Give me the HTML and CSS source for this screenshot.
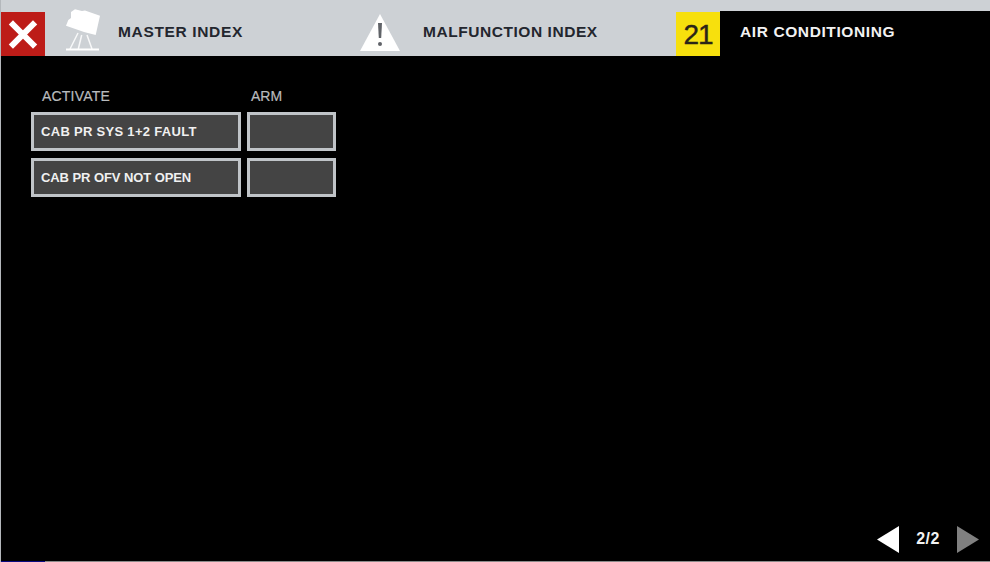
FILE: index.html
```html
<!DOCTYPE html>
<html lang="en">
<head>
<meta charset="utf-8">
<title>Air Conditioning</title>
<link rel="stylesheet" href="styles.css">
</head>
<body>
<div class="app">
  <header class="topbar">
    <button class="close" aria-label="Close">
      <svg width="44" height="44" viewBox="0 0 44 44"><path d="M12 12.5 L32 32.5 M32 12.5 L12 32.5" stroke="#fff" stroke-width="6" stroke-linecap="square" fill="none"/></svg>
    </button>
    <div class="tab tab-master">
      <svg class="icon-master" width="38" height="44" viewBox="0 0 38 44">
        <path d="M6 4 L10 1.3 L17 3 L20 2.5 L35 7.7 L30.7 27 L19 24 L1 17.7 L3.3 12 L6 10 Z" fill="#fff"/>
        <path d="M13 25 L5 41 M16.7 27 L13.3 41 M22 27 L27 41" stroke="#fff" stroke-width="1.5" fill="none" opacity=".85"/>
        <path d="M1 41.5 H34" stroke="#fff" stroke-width="2" fill="none"/>
      </svg>
      <span class="tab-label">MASTER INDEX</span>
    </div>
    <div class="tab tab-malfunction">
      <svg class="icon-warn" width="40" height="37" viewBox="0 0 40 37">
        <path d="M20 0 L40 37 H0 Z" fill="#fff"/>
        <path d="M18 9 H22 L21.2 24 H18.8 Z" fill="#606368"/>
        <circle cx="20" cy="30" r="2" fill="#606368"/>
      </svg>
      <span class="tab-label">MALFUNCTION INDEX</span>
    </div>
    <div class="chapter">21</div>
    <div class="tab-active"><span class="tab-label-active">AIR CONDITIONING</span></div>
  </header>

  <main class="content">
    <div class="grid">
      <div class="col-head">ACTIVATE</div>
      <div class="col-head col-head-arm">ARM</div>
      <div class="btn btn-wide">CAB PR SYS 1+2 FAULT</div>
      <div class="btn"></div>
      <div class="btn btn-tight">CAB PR OFV NOT OPEN</div>
      <div class="btn"></div>
    </div>
  </main>

  <footer class="pager">
    <svg width="22" height="27" viewBox="0 0 22 27"><path d="M22 0 V27 L0 13.5 Z" fill="#fff"/></svg>
    <span class="page-num">2/2</span>
    <svg width="22" height="27" viewBox="0 0 22 27"><path d="M0 0 V27 L22 13.5 Z" fill="#808080"/></svg>
  </footer>
  <div class="edge"><span class="edge-blue"></span></div>
</div>
</body>
</html>
```
FILE: styles.css
```css
* { box-sizing: border-box; }
html, body { margin: 0; padding: 0; background: #000; }
body { font-family: "Liberation Sans", Arial, sans-serif; }
.app {
  width: 990px;
  height: 562px;
  display: flex;
  flex-direction: column;
  border-left: 1px solid #b4b8bc;
  overflow: hidden;
}
.topbar {
  height: 56px;
  flex: none;
  background: #cdd1d5;
  display: flex;
  align-items: stretch;
  padding-top: 12px;
}
.close {
  width: 44px;
  height: 44px;
  flex: none;
  padding: 0;
  border: 0;
  background: #bd1c18;
  display: block;
}
.close svg { display: block; }
.tab { display: flex; align-items: flex-end; }
.tab-master { width: 315px; padding-left: 20px; }
.tab-malfunction { width: 316px; }
.icon-master { display: block; flex: none; align-self: flex-start; margin-top: -4px; }
.icon-warn { display: block; flex: none; margin-bottom: 5px; }
.tab-label {
  font-size: 15.5px;
  font-weight: bold;
  letter-spacing: .65px;
  color: #23262e;
  line-height: 18px;
  margin-bottom: 15px;
  white-space: nowrap;
}
.tab-master .tab-label { margin-left: 15px; }
.tab-malfunction .tab-label { margin-left: 23px; letter-spacing: .55px; }
.chapter {
  width: 44px;
  height: 44px;
  flex: none;
  background: #f7e00d;
  color: #2a2418;
  font-size: 28px;
  line-height: 45px;
  letter-spacing: -1px;
  text-align: center;
  -webkit-text-stroke: .4px #2a2418;
}
.tab-active {
  flex: 1;
  background: #000;
  margin-top: -1px;
  padding-left: 20px;
}
.tab-label-active {
  display: block;
  font-size: 15.5px;
  font-weight: bold;
  letter-spacing: .6px;
  color: #f2f2f2;
  line-height: 18px;
  margin-top: 12px;
  white-space: nowrap;
}
.content { flex: 1; padding: 32px 0 0 30px; }
.grid {
  display: grid;
  grid-template-columns: 210px 89px;
  grid-template-rows: 17px;
  grid-auto-rows: 39px;
  gap: 7px 6px;
}
.col-head {
  font-size: 14px;
  line-height: 16px;
  letter-spacing: .2px;
  color: #b8bbbe;
  padding-left: 11px;
  -webkit-text-stroke: .2px #b8bbbe;
}
.col-head-arm { padding-left: 4px; letter-spacing: 0; }
.btn {
  border: 3px solid #c0c4c8;
  background: #444;
  color: #f0f0f0;
  font-size: 13px;
  font-weight: bold;
  line-height: 33px;
  padding-left: 7px;
  white-space: nowrap;
}
.btn-wide { letter-spacing: .3px; }
.btn-tight { letter-spacing: -.08px; }
.pager {
  flex: none;
  display: flex;
  align-items: center;
  justify-content: flex-end;
  height: 27px;
  margin-bottom: 8px;
  padding-right: 11px;
}
.pager svg { display: block; }
.page-num {
  width: 58px;
  text-align: center;
  color: #f2f2f2;
  font-size: 16px;
  line-height: 25px;
  margin-bottom: 2px;
  font-weight: bold;
  letter-spacing: .5px;
}
.edge { flex: none; height: 1px; background: #8a8a8a; display: flex; }
.edge-blue { width: 44px; background: #0a0a80; }
```
